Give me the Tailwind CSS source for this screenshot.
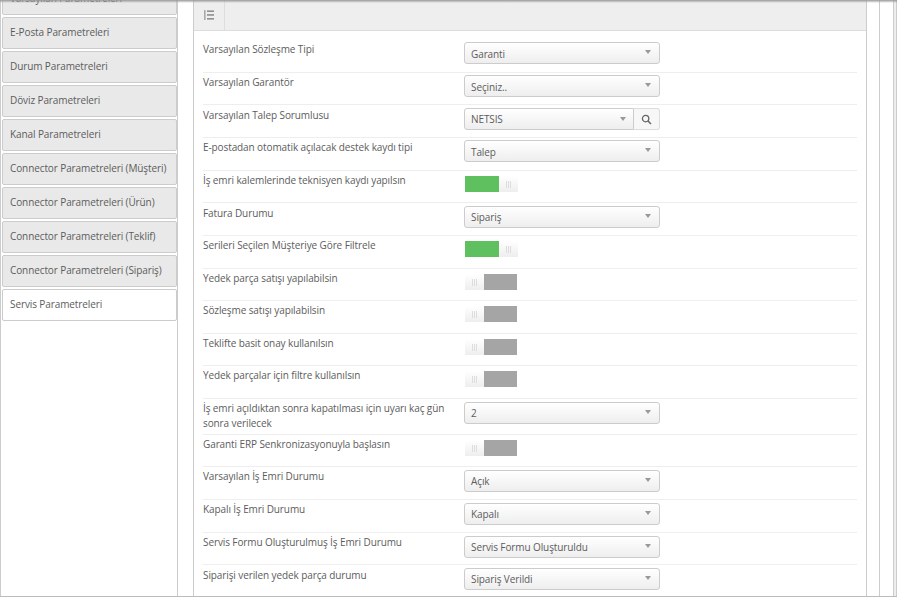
<!DOCTYPE html>
<html lang="tr"><head><meta charset="utf-8"><script src="https://cdn.jsdelivr.net/npm/@tailwindcss/browser@4"></script></head>
<body class="m-0 bg-white">
<div class="relative w-[897px] h-[597px] overflow-hidden bg-white font-['Open_Sans',sans-serif] text-[10px] leading-[14px] tracking-[-0.1px] text-[#5c5c5c] border-b border-[#bbb] flex">
  <div class="absolute top-0 left-0 right-0 h-[3px] bg-linear-to-b from-[#999] to-white/0 z-10"></div>

  <aside class="w-[178px] shrink-0 border-l border-r border-[#ccc] pl-px flex flex-col gap-[2px] -mt-[17px] h-[614px]">
    <div class="h-[32px] shrink-0 px-[7px] pb-[2px] flex items-center bg-[#e9e9e9] border border-[#ccc] rounded-[2px]">Varsayılan Parametreleri</div>
    <div class="h-[32px] shrink-0 px-[7px] pb-[2px] flex items-center bg-[#e9e9e9] border border-[#ccc] rounded-[2px]">E-Posta Parametreleri</div>
    <div class="h-[32px] shrink-0 px-[7px] pb-[2px] flex items-center bg-[#e9e9e9] border border-[#ccc] rounded-[2px]">Durum Parametreleri</div>
    <div class="h-[32px] shrink-0 px-[7px] pb-[2px] flex items-center bg-[#e9e9e9] border border-[#ccc] rounded-[2px]">Döviz Parametreleri</div>
    <div class="h-[32px] shrink-0 px-[7px] pb-[2px] flex items-center bg-[#e9e9e9] border border-[#ccc] rounded-[2px]">Kanal Parametreleri</div>
    <div class="h-[32px] shrink-0 px-[7px] pb-[2px] flex items-center bg-[#e9e9e9] border border-[#ccc] rounded-[2px]">Connector Parametreleri (Müşteri)</div>
    <div class="h-[32px] shrink-0 px-[7px] pb-[2px] flex items-center bg-[#e9e9e9] border border-[#ccc] rounded-[2px]">Connector Parametreleri (Ürün)</div>
    <div class="h-[32px] shrink-0 px-[7px] pb-[2px] flex items-center bg-[#e9e9e9] border border-[#ccc] rounded-[2px]">Connector Parametreleri (Teklif)</div>
    <div class="h-[32px] shrink-0 px-[7px] pb-[2px] flex items-center bg-[#e9e9e9] border border-[#ccc] rounded-[2px]">Connector Parametreleri (Sipariş)</div>
    <div class="h-[32px] shrink-0 px-[7px] pb-[2px] flex items-center bg-white border border-[#ccc] rounded-[2px]">Servis Parametreleri</div>
  </aside>

  <main class="ml-[15px] w-[674px] shrink-0 border-l border-r border-[#ccc] h-full flex flex-col">
    <div class="h-[31px] shrink-0 bg-[#eee] border-b border-[#ddd] flex">
      <div class="w-[31px] border-r border-[#ddd] flex items-center justify-center">
        <svg width="12" height="12" viewBox="0 0 12 12" fill="none"><rect x="4" y="1.5" width="7" height="1.3" fill="#7a7a7a"/><rect x="4" y="5.3" width="7" height="1.3" fill="#7a7a7a"/><rect x="4" y="9.2" width="7" height="1.3" fill="#7a7a7a"/><rect x="1" y="1" width="1.6" height="10" fill="#aaa"/></svg>
      </div>
    </div>
    <div class="pl-[9px] w-[663px] flex flex-col">

      <div class="h-[42px] shrink-0 pt-[11px] border-b border-[#eee] flex items-start">
        <div class="w-[261px]">Varsayılan Sözleşme Tipi</div>
        <div class="w-[196px] h-[22px] pl-[6px] pr-[8px] pt-px border border-[#ccc] rounded-[3px] bg-linear-to-b from-white to-[#eee] flex items-center justify-between"><span>Garanti</span><span class="w-0 h-0 border-x-[3px] border-x-transparent border-t-[4px] border-t-[#999] -mt-[3px]"></span></div>
      </div>
      <div class="h-[32px] shrink-0 pt-[2px] border-b border-[#eee] flex items-start">
        <div class="w-[261px]">Varsayılan Garantör</div>
        <div class="w-[196px] h-[22px] pl-[6px] pr-[8px] pt-px border border-[#ccc] rounded-[3px] bg-linear-to-b from-white to-[#eee] flex items-center justify-between"><span>Seçiniz..</span><span class="w-0 h-0 border-x-[3px] border-x-transparent border-t-[4px] border-t-[#999] -mt-[3px]"></span></div>
      </div>
      <div class="h-[33px] shrink-0 pt-[3px] border-b border-[#eee] flex items-start">
        <div class="w-[261px]">Varsayılan Talep Sorumlusu</div>
        <div class="w-[170px] h-[22px] pl-[6px] pr-[7px] border border-[#ccc] rounded-l-[3px] bg-linear-to-b from-white to-[#eee] flex items-center justify-between"><span>NETSIS</span><span class="w-0 h-0 border-x-[3px] border-x-transparent border-t-[4px] border-t-[#999] -mt-[1px]"></span></div>
        <div class="w-[26px] h-[22px] border-y border-r border-[#ddd] rounded-r-[3px] bg-[#f7f7f7] flex items-center justify-center">
          <svg width="11" height="11" viewBox="0 0 11 11" fill="none"><circle cx="4.6" cy="4.6" r="3.2" stroke="#666" stroke-width="1.3"/><path d="M7 7l3 3" stroke="#666" stroke-width="1.5"/></svg>
        </div>
      </div>
      <div class="h-[33px] shrink-0 pt-[2px] border-b border-[#eee] flex items-start">
        <div class="w-[261px]">E-postadan otomatik açılacak destek kaydı tipi</div>
        <div class="w-[196px] h-[22px] pl-[6px] pr-[8px] pt-px border border-[#ccc] rounded-[3px] bg-linear-to-b from-white to-[#eee] flex items-center justify-between"><span>Talep</span><span class="w-0 h-0 border-x-[3px] border-x-transparent border-t-[4px] border-t-[#999] -mt-[3px]"></span></div>
      </div>
      <div class="h-[32px] shrink-0 pt-[2px] border-b border-[#eee] flex items-start">
        <div class="w-[262px]">İş emri kalemlerinde teknisyen kaydı yapılsın</div>
        <div class="w-[53px] h-[16px] mt-[3px] flex"><div class="w-[34px] bg-[#5fc060]"></div><div class="w-[19px] bg-linear-to-b from-white to-[#eee] flex items-center justify-center gap-px"><i class="w-px h-[7px] bg-[#ddd]"></i><i class="w-px h-[7px] bg-[#ddd]"></i><i class="w-px h-[7px] bg-[#ddd]"></i></div></div>
      </div>
      <div class="h-[33px] shrink-0 pt-[3px] border-b border-[#eee] flex items-start">
        <div class="w-[261px]">Fatura Durumu</div>
        <div class="w-[196px] h-[22px] pl-[6px] pr-[8px] border border-[#ccc] rounded-[3px] bg-linear-to-b from-white to-[#eee] flex items-center justify-between"><span>Sipariş</span><span class="w-0 h-0 border-x-[3px] border-x-transparent border-t-[4px] border-t-[#999] -mt-[3px]"></span></div>
      </div>
      <div class="h-[33px] shrink-0 pt-[2px] border-b border-[#eee] flex items-start">
        <div class="w-[262px]">Serileri Seçilen Müşteriye Göre Filtrele</div>
        <div class="w-[53px] h-[16px] mt-[3px] flex"><div class="w-[34px] bg-[#5fc060]"></div><div class="w-[19px] bg-linear-to-b from-white to-[#eee] flex items-center justify-center gap-px"><i class="w-px h-[7px] bg-[#ddd]"></i><i class="w-px h-[7px] bg-[#ddd]"></i><i class="w-px h-[7px] bg-[#ddd]"></i></div></div>
      </div>
      <div class="h-[32px] shrink-0 pt-[2px] border-b border-[#eee] flex items-start">
        <div class="w-[262px]">Yedek parça satışı yapılabilsin</div>
        <div class="w-[53px] h-[16px] mt-[3px] flex"><div class="w-[19px] bg-linear-to-b from-white to-[#eee] flex items-center justify-center gap-px"><i class="w-px h-[7px] bg-[#ddd]"></i><i class="w-px h-[7px] bg-[#ddd]"></i><i class="w-px h-[7px] bg-[#ddd]"></i></div><div class="w-[33px] bg-[#a5a5a5]"></div></div>
      </div>
      <div class="h-[33px] shrink-0 pt-[2px] border-b border-[#eee] flex items-start">
        <div class="w-[262px]">Sözleşme satışı yapılabilsin</div>
        <div class="w-[53px] h-[16px] mt-[3px] flex"><div class="w-[19px] bg-linear-to-b from-white to-[#eee] flex items-center justify-center gap-px"><i class="w-px h-[7px] bg-[#ddd]"></i><i class="w-px h-[7px] bg-[#ddd]"></i><i class="w-px h-[7px] bg-[#ddd]"></i></div><div class="w-[33px] bg-[#a5a5a5]"></div></div>
      </div>
      <div class="h-[32px] shrink-0 pt-[2px] border-b border-[#eee] flex items-start">
        <div class="w-[262px]">Teklifte basit onay kullanılsın</div>
        <div class="w-[53px] h-[16px] mt-[3px] flex"><div class="w-[19px] bg-linear-to-b from-white to-[#eee] flex items-center justify-center gap-px"><i class="w-px h-[7px] bg-[#ddd]"></i><i class="w-px h-[7px] bg-[#ddd]"></i><i class="w-px h-[7px] bg-[#ddd]"></i></div><div class="w-[33px] bg-[#a5a5a5]"></div></div>
      </div>
      <div class="h-[33px] shrink-0 pt-[2px] border-b border-[#eee] flex items-start">
        <div class="w-[262px]">Yedek parçalar için filtre kullanılsın</div>
        <div class="w-[53px] h-[16px] mt-[3px] flex"><div class="w-[19px] bg-linear-to-b from-white to-[#eee] flex items-center justify-center gap-px"><i class="w-px h-[7px] bg-[#ddd]"></i><i class="w-px h-[7px] bg-[#ddd]"></i><i class="w-px h-[7px] bg-[#ddd]"></i></div><div class="w-[33px] bg-[#a5a5a5]"></div></div>
      </div>
      <div class="h-[36px] shrink-0 pt-[2px] border-b border-[#eee] flex items-start">
        <div class="w-[261px] pr-[6px] leading-[15px]">İş emri açıldıktan sonra kapatılması için uyarı kaç gün sonra verilecek</div>
        <div class="w-[196px] h-[22px] mt-px pl-[6px] pr-[8px] border border-[#ccc] rounded-[3px] bg-linear-to-b from-white to-[#eee] flex items-center justify-between"><span>2</span><span class="w-0 h-0 border-x-[3px] border-x-transparent border-t-[4px] border-t-[#999] -mt-[3px]"></span></div>
      </div>
      <div class="h-[32px] shrink-0 pt-[2px] border-b border-[#eee] flex items-start">
        <div class="w-[262px]">Garanti ERP Senkronizasyonuyla başlasın</div>
        <div class="w-[53px] h-[16px] mt-[3px] flex"><div class="w-[19px] bg-linear-to-b from-white to-[#eee] flex items-center justify-center gap-px"><i class="w-px h-[7px] bg-[#ddd]"></i><i class="w-px h-[7px] bg-[#ddd]"></i><i class="w-px h-[7px] bg-[#ddd]"></i></div><div class="w-[33px] bg-[#a5a5a5]"></div></div>
      </div>
      <div class="h-[33px] shrink-0 pt-[2px] border-b border-[#eee] flex items-start">
        <div class="w-[261px]">Varsayılan İş Emri Durumu</div>
        <div class="w-[196px] h-[22px] mt-px pl-[6px] pr-[8px] border border-[#ccc] rounded-[3px] bg-linear-to-b from-white to-[#eee] flex items-center justify-between"><span>Açık</span><span class="w-0 h-0 border-x-[3px] border-x-transparent border-t-[4px] border-t-[#999] -mt-[3px]"></span></div>
      </div>
      <div class="h-[33px] shrink-0 pt-[2px] border-b border-[#eee] flex items-start">
        <div class="w-[261px]">Kapalı İş Emri Durumu</div>
        <div class="w-[196px] h-[22px] mt-px pl-[6px] pr-[8px] border border-[#ccc] rounded-[3px] bg-linear-to-b from-white to-[#eee] flex items-center justify-between"><span>Kapalı</span><span class="w-0 h-0 border-x-[3px] border-x-transparent border-t-[4px] border-t-[#999] -mt-[3px]"></span></div>
      </div>
      <div class="h-[32px] shrink-0 pt-[2px] border-b border-[#eee] flex items-start">
        <div class="w-[261px]">Servis Formu Oluşturulmuş İş Emri Durumu</div>
        <div class="w-[196px] h-[22px] mt-px pl-[6px] pr-[8px] border border-[#ccc] rounded-[3px] bg-linear-to-b from-white to-[#eee] flex items-center justify-between"><span>Servis Formu Oluşturuldu</span><span class="w-0 h-0 border-x-[3px] border-x-transparent border-t-[4px] border-t-[#999] -mt-[3px]"></span></div>
      </div>
      <div class="h-[32px] shrink-0 pt-[3px] flex items-start">
        <div class="w-[261px]">Siparişi verilen yedek parça durumu</div>
        <div class="w-[196px] h-[22px] pl-[6px] pr-[8px] border border-[#ccc] rounded-[3px] bg-linear-to-b from-white to-[#eee] flex items-center justify-between"><span>Sipariş Verildi</span><span class="w-0 h-0 border-x-[3px] border-x-transparent border-t-[4px] border-t-[#999] -mt-[3px]"></span></div>
      </div>
    </div>
  </main>
  <div class="w-[13px] shrink-0 border-r border-[#ccc]"></div>
  <div class="w-[14px] shrink-0 border-r border-[#ccc]"></div>
  <div class="flex-1 bg-[#eee] border-r border-[#ccc]"></div>
</div>
</body></html>
